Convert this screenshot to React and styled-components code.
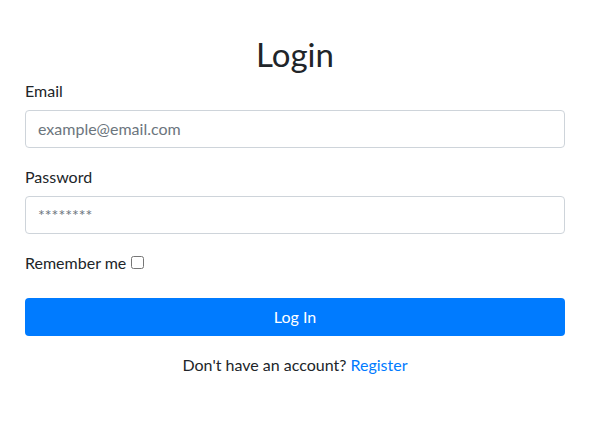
import { useState } from "react";
import styled, { createGlobalStyle } from "styled-components";

const GlobalStyle = createGlobalStyle`
  body {
    margin: 0;
    background: #fff;
    font-family: Lato, "Noto Sans", sans-serif;
    color: #212529;
  }
`;

const Page = styled.div`
  width: 540px;
  padding: 35px 0 0 25px;
`;

const Title = styled.h1`
  margin: 0 0 4px;
  font-size: 33px;
  font-weight: 400;
  line-height: 1.2;
  text-align: center;
`;

const Group = styled.div`
  margin-bottom: 17px;
`;

const Label = styled.label`
  display: block;
  font-size: 16px;
  line-height: 24px;
  margin-bottom: 7px;
`;

const Input = styled.input`
  display: block;
  box-sizing: border-box;
  width: 100%;
  height: 38px;
  padding: 6px 12px;
  font-family: inherit;
  font-size: 16px;
  color: #495057;
  border: 1px solid #ced4da;
  border-radius: 4px;
  outline: none;
  &::placeholder {
    color: #6c757d;
  }
`;

const CheckRow = styled.label`
  display: flex;
  align-items: center;
  font-size: 16px;
  line-height: 24px;
  margin: 5px 0 23px;
  input {
    margin: 0 0 0 5px;
    width: 13px;
    height: 13px;
  }
`;

const Button = styled.button`
  display: block;
  width: 100%;
  height: 38px;
  border: none;
  border-radius: 4px;
  background: #007bff;
  color: #fff;
  font-family: inherit;
  font-size: 16px;
  cursor: pointer;
`;

const Footer = styled.p`
  margin: 17px 0 0;
  text-align: center;
  font-size: 16px;
  line-height: 24px;
  a {
    color: #007bff;
    text-decoration: none;
  }
`;

export default function App() {
  const [remember, setRemember] = useState(false);
  return (
    <>
      <GlobalStyle />
      <Page>
        <Title>Login</Title>
        <form onSubmit={(e) => e.preventDefault()}>
          <Group>
            <Label htmlFor="email">Email</Label>
            <Input id="email" type="email" placeholder="example@email.com" />
          </Group>
          <Group>
            <Label htmlFor="password">Password</Label>
            <Input id="password" type="password" placeholder="********" />
          </Group>
          <CheckRow>
            Remember me
            <input
              type="checkbox"
              checked={remember}
              onChange={() => setRemember(!remember)}
            />
          </CheckRow>
          <Button type="submit">Log In</Button>
        </form>
        <Footer>
          Don't have an account? <a href="#">Register</a>
        </Footer>
      </Page>
    </>
  );
}
